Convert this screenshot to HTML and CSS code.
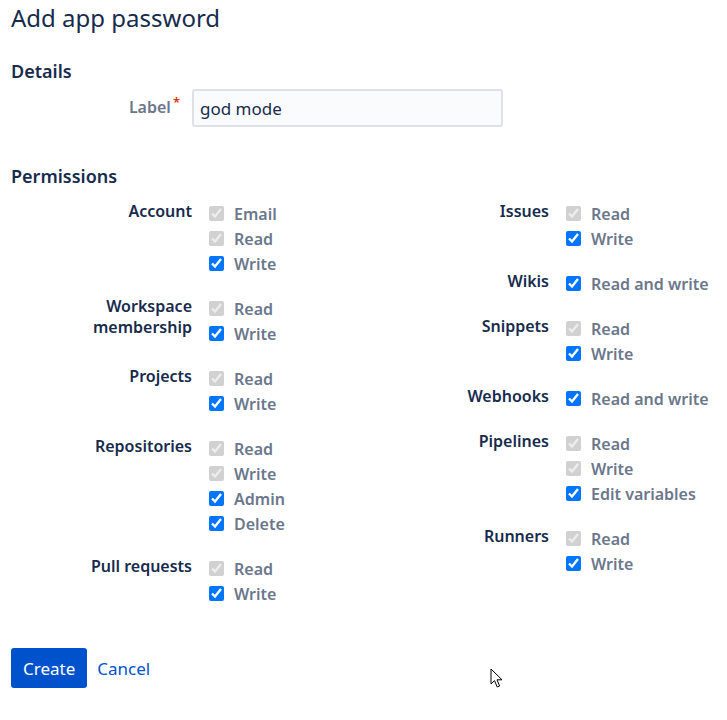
FILE: index.html
```html
<!DOCTYPE html>
<html>
<head>
<meta charset="utf-8">
<link rel="stylesheet" href="styles.css">
</head>
<body>
<div class="page">
  <h1 class="title">Add app password</h1>
  <h2 class="section details">Details</h2>
  <div class="field">
    <label class="field-label">Label<span class="req">*</span></label>
    <input class="text-input" type="text" value="god mode">
  </div>
  <h2 class="section perms-title">Permissions</h2>
  <div class="perms">
    <div class="perm-col">
      <div class="group">
        <div class="group-label">Account</div>
        <div class="opts">
          <label class="opt"><input type="checkbox" checked disabled><span>Email</span></label>
          <label class="opt"><input type="checkbox" checked disabled><span>Read</span></label>
          <label class="opt"><input type="checkbox" checked><span>Write</span></label>
        </div>
      </div>
      <div class="group">
        <div class="group-label">Workspace membership</div>
        <div class="opts">
          <label class="opt"><input type="checkbox" checked disabled><span>Read</span></label>
          <label class="opt"><input type="checkbox" checked><span>Write</span></label>
        </div>
      </div>
      <div class="group">
        <div class="group-label">Projects</div>
        <div class="opts">
          <label class="opt"><input type="checkbox" checked disabled><span>Read</span></label>
          <label class="opt"><input type="checkbox" checked><span>Write</span></label>
        </div>
      </div>
      <div class="group">
        <div class="group-label">Repositories</div>
        <div class="opts">
          <label class="opt"><input type="checkbox" checked disabled><span>Read</span></label>
          <label class="opt"><input type="checkbox" checked disabled><span>Write</span></label>
          <label class="opt"><input type="checkbox" checked><span>Admin</span></label>
          <label class="opt"><input type="checkbox" checked><span>Delete</span></label>
        </div>
      </div>
      <div class="group">
        <div class="group-label">Pull requests</div>
        <div class="opts">
          <label class="opt"><input type="checkbox" checked disabled><span>Read</span></label>
          <label class="opt"><input type="checkbox" checked><span>Write</span></label>
        </div>
      </div>
    </div>
    <div class="perm-col">
      <div class="group">
        <div class="group-label">Issues</div>
        <div class="opts">
          <label class="opt"><input type="checkbox" checked disabled><span>Read</span></label>
          <label class="opt"><input type="checkbox" checked><span>Write</span></label>
        </div>
      </div>
      <div class="group">
        <div class="group-label">Wikis</div>
        <div class="opts">
          <label class="opt"><input type="checkbox" checked><span>Read and write</span></label>
        </div>
      </div>
      <div class="group">
        <div class="group-label">Snippets</div>
        <div class="opts">
          <label class="opt"><input type="checkbox" checked disabled><span>Read</span></label>
          <label class="opt"><input type="checkbox" checked><span>Write</span></label>
        </div>
      </div>
      <div class="group">
        <div class="group-label">Webhooks</div>
        <div class="opts">
          <label class="opt"><input type="checkbox" checked><span>Read and write</span></label>
        </div>
      </div>
      <div class="group">
        <div class="group-label">Pipelines</div>
        <div class="opts">
          <label class="opt"><input type="checkbox" checked disabled><span>Read</span></label>
          <label class="opt"><input type="checkbox" checked disabled><span>Write</span></label>
          <label class="opt"><input type="checkbox" checked><span>Edit variables</span></label>
        </div>
      </div>
      <div class="group">
        <div class="group-label">Runners</div>
        <div class="opts">
          <label class="opt"><input type="checkbox" checked disabled><span>Read</span></label>
          <label class="opt"><input type="checkbox" checked><span>Write</span></label>
        </div>
      </div>
    </div>
  </div>
  <div class="actions">
    <button class="btn-primary" type="button">Create</button>
    <a class="btn-link" href="#">Cancel</a>
  </div>
</div>
<svg class="cursor" width="14" height="22" viewBox="0 0 14 22"><path d="M1 1 L1 16 L4.5 12.6 L7.2 19 L9.6 18 L7 11.8 L12 11.8 Z" fill="#fff" stroke="#000" stroke-width="1" stroke-linejoin="round"/></svg>
</body>
</html>
```

FILE: styles.css
```css
html, body {
  margin: 0;
  padding: 0;
  background: #ffffff;
}
body {
  font-family: "Noto Sans", "Open Sans", sans-serif;
  color: #172b4d;
  font-size: 16px;
}
.page {
  padding: 0 11px;
}
.title {
  margin: 0;
  padding-top: 2px;
  font-size: 24px;
  font-weight: 400;
  line-height: 32px;
  color: #172b4d;
}
.section {
  margin: 0;
  font-size: 18px;
  font-weight: 600;
  line-height: 24px;
  color: #172b4d;
}
.details {
  margin-top: 25px;
}
.field {
  display: flex;
  align-items: center;
  margin-top: 6px;
}
.field-label {
  width: 181px;
  box-sizing: border-box;
  padding-right: 12px;
  text-align: right;
  font-size: 16px;
  font-weight: 600;
  color: #6b778c;
  position: relative;
  top: -1px;
}
.req {
  color: #de350b;
  font-size: 13px;
  vertical-align: top;
  margin-left: 2px;
  position: relative;
  top: -3px;
}
.text-input {
  width: 311px;
  height: 38px;
  box-sizing: border-box;
  border: 2px solid #dfe1e6;
  border-radius: 3px;
  background: #fafbfc;
  padding: 0 6px;
  font-family: inherit;
  font-size: 17px;
  color: #172b4d;
  outline: none;
}
.perms-title {
  margin-top: 37px;
}
.perms {
  display: flex;
  margin-top: 13px;
}
.perm-col {
  flex: none;
  width: 357px;
  display: flex;
  flex-direction: column;
  gap: 20px;
}
.group {
  display: grid;
  grid-template-columns: 181px 1fr;
  column-gap: 17px;
}
.group-label {
  text-align: right;
  font-size: 16px;
  font-weight: 600;
  line-height: 21px;
  color: #172b4d;
}
.opts {
  display: flex;
  flex-direction: column;
}
.opt {
  display: flex;
  align-items: center;
  height: 25px;
  gap: 10px;
  font-size: 16px;
  font-weight: 600;
  color: #6b778c;
  white-space: nowrap;
}
.opt input {
  margin: 0;
  width: 15px;
  height: 15px;
}
.actions {
  display: flex;
  align-items: center;
  gap: 10px;
  margin-top: 42px;
}
.btn-primary {
  height: 40px;
  padding: 0 12px;
  border: none;
  border-radius: 3px;
  background: #0052cc;
  color: #ffffff;
  font-family: inherit;
  font-size: 17px;
}
.btn-link {
  color: #0052cc;
  text-decoration: none;
  font-size: 17px;
}
.cursor {
  position: absolute;
  left: 490px;
  top: 668px;
}
```
